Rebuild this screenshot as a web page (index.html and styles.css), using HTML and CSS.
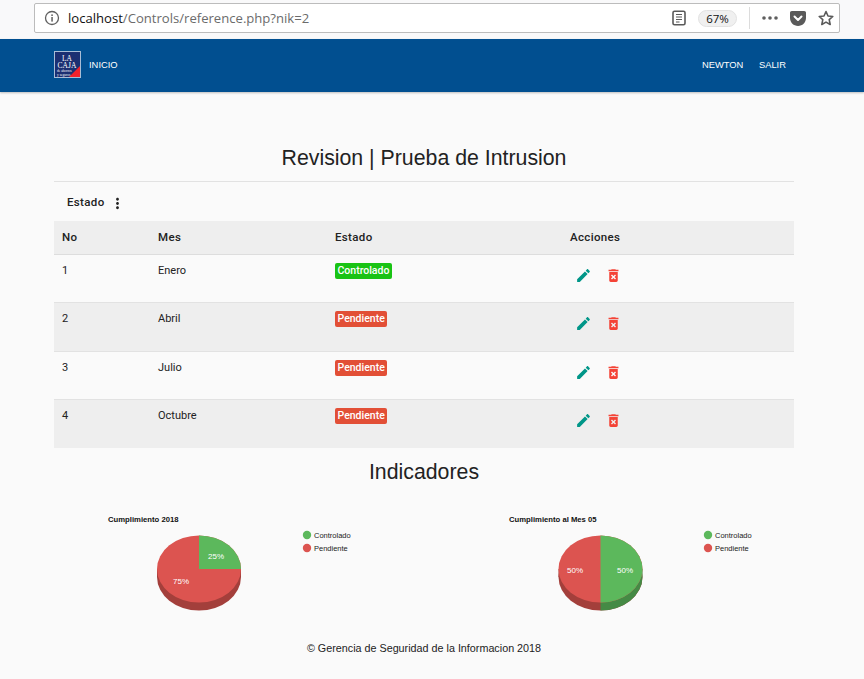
FILE: index.html
```html
<!DOCTYPE html>
<html lang="es">
<head>
    <meta charset="UTF-8">
    <meta name="viewport" content="width=device-width, initial-scale=1.0">
    <title>Revision | Prueba de Intrusion</title>
    <link rel="stylesheet" href="styles.css">
</head>
<body>
    <div class="toolbar">
        <div class="urlbar">
            <svg class="info-icon" viewBox="0 0 16 16" width="16" height="16"><circle cx="8" cy="8" r="6.5" fill="none" stroke="#5f5f5f" stroke-width="1.3"/><rect x="7.3" y="7" width="1.5" height="4.6" fill="#5f5f5f"/><rect x="7.3" y="4.4" width="1.5" height="1.6" fill="#5f5f5f"/></svg>
            <span class="url"><span class="url-host">localhost</span>/Controls/reference.php?nik=2</span>
            <div class="url-actions">
                <svg class="reader-icon" viewBox="0 0 16 16" width="16" height="16"><rect x="2" y="1.2" width="12" height="13.6" rx="1.5" fill="none" stroke="#5a5a5a" stroke-width="1.6"/><path d="M5 4.5h6M5 7h6M5 9.5h6M5 12h3.5" stroke="#5a5a5a" stroke-width="1.1"/></svg>
                <span class="zoom-pill">67%</span>
                <span class="url-sep"></span>
                <svg class="dots-icon" viewBox="0 0 16 4" width="16" height="4"><circle cx="2" cy="2" r="1.8" fill="#5f5f5f"/><circle cx="8" cy="2" r="1.8" fill="#5f5f5f"/><circle cx="14" cy="2" r="1.8" fill="#5f5f5f"/></svg>
                <svg class="pocket-icon" viewBox="0 0 16 15" width="16" height="15"><path d="M1.8 0h12.4C15.200 0 16 .8 16 1.800V7c0 4.400-3.600 8-8 8s-8-3.600-8-8V1.800C0 .8.800 0 1.800 0z" fill="#5a5a5a"/><path d="M4.500 5.500 8 9l3.500-3.500" fill="none" stroke="#fff" stroke-width="2" stroke-linecap="round" stroke-linejoin="round"/></svg>
                <svg class="star-icon" viewBox="0 0 16 16" width="16" height="16"><path d="M8 1.500l2 4.500 4.800.5-3.600 3.200 1 4.800L8 12.100l-4.200 2.400 1-4.800L1.200 6.500 6 6z" fill="none" stroke="#5a5a5a" stroke-width="1.600" stroke-linejoin="round"/></svg>
            </div>
        </div>
    </div>

    <nav class="navbar">
        <div class="nav-left">
            <svg class="logo" viewBox="0 0 27 27" width="27" height="27">
                <rect x="0.500" y="0.500" width="26" height="26" fill="#1b2f72" stroke="#a9bdd6"/>
                <path d="M26 15V26H15z" fill="#f0222c"/>
                <text x="13" y="9.500" class="logo-big">LA</text>
                <text x="13" y="17" class="logo-big">CAJA</text>
                <text x="3" y="21" class="logo-small">de ahorros</text>
                <text x="3" y="25" class="logo-small">y seguros</text>
            </svg>
            <a class="nav-link">INICIO</a>
        </div>
        <div class="nav-right">
            <a class="nav-link">NEWTON</a>
            <a class="nav-link">SALIR</a>
        </div>
    </nav>

    <div class="container">
        <h1 class="page-title">Revision | Prueba de Intrusion</h1>
        <div class="filter">
            <span class="filter-label">Estado</span>
            <svg viewBox="0 0 24 24" width="17" height="17"><path d="M12 8c1.100 0 2-.9 2-2s-.9-2-2-2-2 .9-2 2 .9 2 2 2zm0 2c-1.100 0-2 .9-2 2s.9 2 2 2 2-.9 2-2-.9-2-2-2zm0 6c-1.100 0-2 .9-2 2s.9 2 2 2 2-.9 2-2-.9-2-2-2z" fill="#222"/></svg>
        </div>

        <table class="review-table">
            <thead>
                <tr><th class="col-no">No</th><th class="col-mes">Mes</th><th class="col-estado">Estado</th><th>Acciones</th></tr>
            </thead>
            <tbody>
                <tr>
                    <td class="cell-text">1</td><td class="cell-text">Enero</td><td><span class="badge badge-ok">Controlado</span></td>
                    <td><div class="actions">
                        <svg class="icon-edit" viewBox="0 0 24 24" width="17" height="17"><path d="M3 17.250V21h3.750L17.810 9.940l-3.750-3.750L3 17.250zM20.710 7.040c.39-.39.39-1.020 0-1.410l-2.340-2.340c-.39-.39-1.020-.39-1.410 0l-1.830 1.830 3.750 3.750 1.830-1.830z"/></svg>
                        <svg class="icon-delete" viewBox="0 0 24 24" width="17" height="17"><path d="M6 19c0 1.100.9 2 2 2h8c1.100 0 2-.9 2-2V7H6v12zm2.460-7.120l1.410-1.410L12 12.590l2.120-2.120 1.410 1.410L13.410 14l2.120 2.120-1.410 1.410L12 15.410l-2.120 2.120-1.410-1.410L10.590 14l-2.130-2.120zM15.500 4l-1-1h-5l-1 1H5v2h14V4z"/></svg>
                    </div></td>
                </tr>
                <tr>
                    <td class="cell-text">2</td><td class="cell-text">Abril</td><td><span class="badge badge-pending">Pendiente</span></td>
                    <td><div class="actions">
                        <svg class="icon-edit" viewBox="0 0 24 24" width="17" height="17"><path d="M3 17.250V21h3.750L17.810 9.940l-3.750-3.750L3 17.250zM20.710 7.040c.39-.39.39-1.020 0-1.410l-2.340-2.340c-.39-.39-1.020-.39-1.410 0l-1.830 1.830 3.750 3.750 1.830-1.830z"/></svg>
                        <svg class="icon-delete" viewBox="0 0 24 24" width="17" height="17"><path d="M6 19c0 1.100.9 2 2 2h8c1.100 0 2-.9 2-2V7H6v12zm2.460-7.120l1.410-1.410L12 12.590l2.120-2.120 1.410 1.410L13.410 14l2.120 2.120-1.410 1.410L12 15.410l-2.120 2.120-1.410-1.410L10.590 14l-2.130-2.120zM15.500 4l-1-1h-5l-1 1H5v2h14V4z"/></svg>
                    </div></td>
                </tr>
                <tr>
                    <td class="cell-text">3</td><td class="cell-text">Julio</td><td><span class="badge badge-pending">Pendiente</span></td>
                    <td><div class="actions">
                        <svg class="icon-edit" viewBox="0 0 24 24" width="17" height="17"><path d="M3 17.250V21h3.750L17.810 9.940l-3.750-3.750L3 17.250zM20.710 7.040c.39-.39.39-1.020 0-1.410l-2.340-2.340c-.39-.39-1.020-.39-1.410 0l-1.830 1.830 3.750 3.750 1.830-1.830z"/></svg>
                        <svg class="icon-delete" viewBox="0 0 24 24" width="17" height="17"><path d="M6 19c0 1.100.9 2 2 2h8c1.100 0 2-.9 2-2V7H6v12zm2.460-7.120l1.410-1.410L12 12.590l2.120-2.120 1.410 1.410L13.410 14l2.120 2.120-1.410 1.410L12 15.410l-2.120 2.120-1.410-1.410L10.590 14l-2.130-2.120zM15.500 4l-1-1h-5l-1 1H5v2h14V4z"/></svg>
                    </div></td>
                </tr>
                <tr>
                    <td class="cell-text">4</td><td class="cell-text">Octubre</td><td><span class="badge badge-pending">Pendiente</span></td>
                    <td><div class="actions">
                        <svg class="icon-edit" viewBox="0 0 24 24" width="17" height="17"><path d="M3 17.250V21h3.750L17.810 9.940l-3.750-3.750L3 17.250zM20.710 7.040c.39-.39.39-1.020 0-1.410l-2.340-2.340c-.39-.39-1.020-.39-1.410 0l-1.830 1.830 3.750 3.750 1.830-1.830z"/></svg>
                        <svg class="icon-delete" viewBox="0 0 24 24" width="17" height="17"><path d="M6 19c0 1.100.9 2 2 2h8c1.100 0 2-.9 2-2V7H6v12zm2.460-7.120l1.410-1.410L12 12.590l2.120-2.120 1.410 1.410L13.410 14l2.120 2.120-1.410 1.410L12 15.410l-2.120 2.120-1.410-1.410L10.590 14l-2.130-2.120zM15.500 4l-1-1h-5l-1 1H5v2h14V4z"/></svg>
                    </div></td>
                </tr>
            </tbody>
        </table>

        <h2 class="section-title">Indicadores</h2>

        <div class="charts">
            <svg class="chart" viewBox="0 0 339 110" width="339" height="110">
                <text x="54" y="16" class="chart-title">Cumplimiento 2018</text>
                <ellipse cx="145" cy="71" rx="42" ry="33.500" fill="#a33f3b"/>
                <rect x="103" y="63" width="84" height="8" fill="#a33f3b"/>
                <ellipse cx="145" cy="63" rx="42" ry="33.500" fill="#dc5450"/>
                <path d="M145 63V29.500A42 33.500 0 0 1 187 63z" fill="#5cb85c"/>
                <text x="162" y="53" class="slice-label">25%</text>
                <text x="127" y="78" class="slice-label">75%</text>
                <circle cx="253" cy="29" r="4.200" fill="#5cb85c"/>
                <text x="260" y="32" class="legend">Controlado</text>
                <circle cx="253" cy="42" r="4.200" fill="#dc5450"/>
                <text x="260" y="45" class="legend">Pendiente</text>
            </svg>
            <svg class="chart" viewBox="0 0 339 110" width="339" height="110">
                <text x="54" y="16" class="chart-title">Cumplimiento al Mes 05</text>
                <ellipse cx="145.500" cy="71" rx="42" ry="33.500" fill="#a33f3b"/>
                <rect x="103.500" y="63" width="42" height="8" fill="#a33f3b"/>
                <path d="M145.500 63h42v8A42 33.500 0 0 1 145.500 104.500z" fill="#458a45"/>
                <ellipse cx="145.500" cy="63" rx="42" ry="33.500" fill="#dc5450"/>
                <path d="M145.500 29.500A42 33.500 0 0 1 145.500 96.500z" fill="#5cb85c"/>
                <text x="170" y="66.500" class="slice-label">50%</text>
                <text x="120" y="66.500" class="slice-label">50%</text>
                <circle cx="253" cy="29" r="4.200" fill="#5cb85c"/>
                <text x="260" y="32" class="legend">Controlado</text>
                <circle cx="253" cy="42" r="4.200" fill="#dc5450"/>
                <text x="260" y="45" class="legend">Pendiente</text>
            </svg>
        </div>

        <p class="footer">© Gerencia de Seguridad de la Informacion 2018</p>
    </div>
</body>
</html>
```

FILE: styles.css
```css
* { margin: 0; padding: 0; box-sizing: border-box; }
html, body { height: 679px; overflow: hidden; }
body { font-family: Roboto, 'Liberation Sans', sans-serif; background: #fafafa; color: #222; }

/* browser chrome */
.toolbar { height: 39px; background: #f9f9fa; padding: 3px 24px 0 34px; }
.urlbar { height: 30px; background: #fff; border: 1px solid #bcbcbc; border-radius: 2px; display: flex; align-items: center; padding: 0 0 0 9px; }
.info-icon { margin-right: 8px; }
.url { font-family: 'Open Sans', 'Liberation Sans', sans-serif; font-size: 13.100px; color: #6b6b6b; }
.url-host { color: #111; }
.url-actions { margin-left: auto; display: flex; align-items: center; }
.reader-icon { margin-right: 11px; }
.zoom-pill { width: 39px; height: 17px; line-height: 16px; text-align: center; font-family: 'Open Sans', sans-serif; font-size: 11.500px; color: #111; background: #f0f0f0; border: 1px solid #e2e2e2; border-radius: 9px; }
.url-sep { width: 1px; height: 22px; background: #dcdcdc; margin: 0 12px; }
.dots-icon { margin-right: 12px; }
.pocket-icon { margin-right: 12px; }
.star-icon { margin-right: 5px; }

/* navbar */
.navbar { height: 53px; background: #014f90; box-shadow: 0 1px 2px rgba(0,0,0,.25); display: flex; justify-content: space-between; align-items: center; padding: 0 78px 2px 54px; }
.nav-left, .nav-right { display: flex; align-items: center; }
.nav-right { gap: 15.500px; }
.logo { margin-right: 8px; }
.logo-big { font-family: 'Liberation Serif', serif; font-size: 7.500px; fill: #fff; text-anchor: middle; }
.logo-small { font-family: 'Liberation Serif', serif; font-size: 3.500px; fill: #fff; }
.nav-link { font-size: 9.400px; color: #fff; font-family: 'Liberation Sans', sans-serif; }

/* content */
.container { width: 740px; margin-left: 54px; }
.page-title { font-family: 'Liberation Sans', sans-serif; font-size: 21.300px; font-weight: 400; color: #222; text-align: center; padding-top: 54px; height: 90px; border-bottom: 1px solid #e2e2e2; line-height: 24px; }
.filter { height: 39px; padding: 2px 0 0 13px; display: flex; align-items: center; gap: 4px; }
.filter-label { font-size: 11.500px; font-weight: 500; letter-spacing: .35px; color: #222; margin-bottom: 2px; }
.filter svg { margin-top: 2px; }

.review-table { width: 100%; border-collapse: collapse; table-layout: fixed; font-size: 11px; }
.review-table th { height: 33px; background: #eee; border-bottom: 1px solid #ddd; text-align: left; padding: 0 8px; font-size: 11.500px; font-weight: 500; letter-spacing: .35px; }
.col-no { width: 96px; }
.col-mes { width: 177px; }
.col-estado { width: 235px; }
.review-table td { height: 48.500px; padding: 8px 8px 0; vertical-align: top; border-bottom: 1px solid #e2e2e2; }
.review-table td.cell-text { padding-top: 9px; }
.review-table tbody tr:nth-child(even) td { background: #eee; }
.review-table tbody tr:last-child td { border-bottom: 0; }
.badge { display: inline-block; color: #fff; font-size: 10.500px; font-weight: 500; line-height: 16px; padding: 0 2.500px; border-radius: 2px; }
.badge-ok { background: #19c314; }
.badge-pending { background: #e24f36; }
.actions { display: flex; gap: 12.500px; padding: 4px 0 0 5px; }
.icon-edit { fill: #009688; }
.icon-delete { fill: #f44336; }

.section-title { font-family: 'Liberation Sans', sans-serif; font-size: 21.300px; font-weight: 400; text-align: center; line-height: 24px; padding-top: 12px; height: 58px; }
.charts { display: flex; gap: 62px; }
.chart { flex: none; }
.chart-title { font-family: 'Liberation Sans', sans-serif; font-size: 7.700px; font-weight: 700; fill: #111; }
.slice-label { font-family: 'Liberation Sans', sans-serif; font-size: 8px; fill: #fff; text-anchor: middle; }
.legend { font-family: 'Liberation Sans', sans-serif; font-size: 7.500px; fill: #222; }
.footer { font-family: 'Liberation Sans', sans-serif; font-size: 10.780px; text-align: center; margin-top: 26px; color: #222; }
```
